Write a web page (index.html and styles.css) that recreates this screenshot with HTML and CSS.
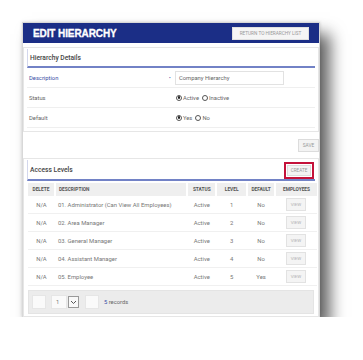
FILE: index.html
```html
<!DOCTYPE html>
<html lang="en">

<head>
    <meta charset="UTF-8" />
    <meta name="viewport" content="width=device-width, initial-scale=1" />
    <title>Edit Hierarchy</title>
    <link rel="stylesheet" href="styles.css">
</head>

<body>
    <div class="panel">
        <div class="topbar">
            <h1>EDIT HIERARCHY</h1>
            <button class="btn">RETURN TO HIERARCHY LIST</button>
        </div>

        <div class="panel-body">
            <section class="card details">
                <div class="card-head">
                    <h2>Hierarchy Details</h2>
                </div>
                <div class="form-row">
                    <span class="lbl blue">Description</span>
                    <span class="star">&bull;</span>
                    <div class="input">Company Hierarchy</div>
                </div>
                <div class="form-row">
                    <span class="lbl">Status</span>
                    <span class="star"></span>
                    <span class="radio on"></span><span class="opt">Active</span>
                    <span class="radio"></span><span class="opt">Inactive</span>
                </div>
                <div class="form-row">
                    <span class="lbl">Default</span>
                    <span class="star"></span>
                    <span class="radio on"></span><span class="opt">Yes</span>
                    <span class="radio"></span><span class="opt">No</span>
                </div>
            </section>

            <div class="save-row">
                <button class="btn">SAVE</button>
            </div>

            <section class="card access">
                <div class="card-head">
                    <h2>Access Levels</h2>
                    <span class="highlight"><button class="btn">CREATE</button></span>
                </div>
                <table class="levels">
                    <thead>
                        <tr>
                            <th class="c-del">DELETE</th>
                            <th class="c-desc">DESCRIPTION</th>
                            <th class="c-st">STATUS</th>
                            <th class="c-lv">LEVEL</th>
                            <th class="c-df">DEFAULT</th>
                            <th class="c-emp">EMPLOYEES</th>
                        </tr>
                    </thead>
                    <tbody>
                        <tr>
                            <td>N/A</td>
                            <td class="c-desc">01. Administrator (Can View All Employees)</td>
                            <td>Active</td>
                            <td>1</td>
                            <td>No</td>
                            <td><button class="btn view">VIEW</button></td>
                        </tr>
                        <tr>
                            <td>N/A</td>
                            <td class="c-desc">02. Area Manager</td>
                            <td>Active</td>
                            <td>2</td>
                            <td>No</td>
                            <td><button class="btn view">VIEW</button></td>
                        </tr>
                        <tr>
                            <td>N/A</td>
                            <td class="c-desc">03. General Manager</td>
                            <td>Active</td>
                            <td>3</td>
                            <td>No</td>
                            <td><button class="btn view">VIEW</button></td>
                        </tr>
                        <tr>
                            <td>N/A</td>
                            <td class="c-desc">04. Assistant Manager</td>
                            <td>Active</td>
                            <td>4</td>
                            <td>No</td>
                            <td><button class="btn view">VIEW</button></td>
                        </tr>
                        <tr>
                            <td>N/A</td>
                            <td class="c-desc">05. Employee</td>
                            <td>Active</td>
                            <td>5</td>
                            <td>Yes</td>
                            <td><button class="btn view">VIEW</button></td>
                        </tr>
                    </tbody>
                </table>
                <div class="pager">
                    <span class="pbox"></span>
                    <span class="pbox page-no">1</span>
                    <span class="pselect">
                        <svg width="7" height="5" viewBox="0 0 7 5"><path d="M1 1 L3.5 3.5 L6 1" fill="none" stroke="#555" stroke-width="1"/></svg>
                    </span>
                    <span class="pbox"></span>
                    <span class="records"><b>5</b> records</span>
                </div>
            </section>
        </div>
    </div>
</body>

</html>
```

FILE: styles.css
```css
html,
body {
    margin: 0;
    padding: 0;
    background: #fff;
    font-family: Roboto, "Liberation Sans", Arial, sans-serif;
}

body {
    padding: 22px 0 0 22px;
}

.panel {
    width: 296px;
    height: 293px;
    background: #fff;
    border: 1px solid #d8d8d8;
    box-shadow: 10px 12px 15px rgba(0, 0, 0, 0.62), 0 0 3px rgba(0, 0, 0, 0.15);
    display: flex;
    flex-direction: column;
}

.topbar {
    height: 20px;
    background: #1b2e86;
    display: flex;
    align-items: center;
    justify-content: space-between;
    padding: 0 10px 0 10px;
    flex-shrink: 0;
}

.topbar h1 {
    margin: 0;
    color: #fff;
    font-family: "Liberation Sans", Arial, sans-serif;
    font-weight: bold;
    font-size: 10px;
    letter-spacing: -0.1px;
    -webkit-text-stroke: 0.3px #fff;
}

.btn {
    font-family: Roboto, "Liberation Sans", Arial, sans-serif;
    font-size: 4.8px;
    color: #999;
    background: #f3f3f3;
    border: 1px solid #dcdcdc;
    padding: 0 2px;
    height: 13px;
    margin: 0;
    cursor: pointer;
    white-space: nowrap;
}

.topbar .btn {
    width: 77px;
    background: #f5f5f5;
    border-color: #e0e0e0;
    font-size: 4.7px;
}

.panel-body {
    padding: 4px 0 0 0;
    flex: 1;
    display: flex;
    flex-direction: column;
}

.card {
    border: 1px solid #e6e6e6;
    background: #fff;
}

.details {
    padding: 1px 3px 3px 3px;
}

.card-head {
    height: 17px;
    border-left: 1px solid #d3d7ec;
    border-bottom: 2px solid #7282c6;
    display: flex;
    align-items: center;
    justify-content: space-between;
    padding: 0 1px 0 2px;
}

.card-head h2 {
    margin: 0;
    font-size: 6.7px;
    font-weight: 500;
    color: #444;
}

.form-row {
    height: 19px;
    border-bottom: 1px solid #efefef;
    display: flex;
    align-items: center;
    font-size: 5.8px;
    color: #666;
}

.lbl {
    width: 140px;
    padding-left: 2px;
}

.lbl.blue {
    color: #3a4ea6;
}

.star {
    width: 6px;
    color: #3a4ea6;
    font-size: 5px;
}

.input {
    width: 104px;
    height: 12px;
    border: 1px solid #e2e2e2;
    display: flex;
    align-items: center;
    padding-left: 3px;
    color: #666;
}

.radio {
    width: 4px;
    height: 4px;
    border: 0.7px solid #555;
    border-radius: 50%;
    margin: 0 1px 0 1px;
    display: inline-flex;
    align-items: center;
    justify-content: center;
}

.radio.on::after {
    content: "";
    width: 2.4px;
    height: 2.4px;
    border-radius: 50%;
    background: #222;
}

.opt {
    margin-right: 2px;
}

.save-row {
    display: flex;
    justify-content: flex-end;
    padding: 7px 0 6px 0;
}

.save-row .btn {
    width: 21px;
    padding: 0;
}

.access {
    flex: 1;
    padding: 1px 3px 2px 3px;
}

.access .card-head {
    height: 19px;
}

.highlight {
    border: 2px solid #c4123a;
    padding: 1px 1px;
    display: flex;
    margin-top: 1px;
}

.highlight .btn {
    height: 11px;
    width: 24px;
    padding: 0;
    font-size: 4.6px;
}

.levels {
    width: 289px;
    margin: 2px 0 0 1px;
    border-collapse: collapse;
    font-size: 5.9px;
    color: #777;
}

.levels th {
    height: 13px;
    background: #efefef;
    border-left: 2px solid #fff;
    font-size: 4.8px;
    font-weight: bold;
    color: #555;
    text-align: center;
    padding: 0;
}

.levels th:first-child {
    border-left: none;
}

.levels td {
    height: 17px;
    border-bottom: 1px solid #f0f0f0;
    text-align: center;
    padding: 0;
}

.levels .c-del { width: 26px; }
.levels .c-desc { width: 128px; text-align: left; padding-left: 3px; }
.levels .c-st { width: 27px; }
.levels .c-lv { width: 29px; }
.levels .c-df { width: 26px; }
.levels .c-emp { width: 41px; }

.btn.view {
    width: 20px;
    height: 13px;
    padding: 0;
    font-size: 4.4px;
    color: #b0b0b0;
    background: #f4f4f4;
    border-color: #e2e2e2;
}

.pager {
    margin: 4px 1px 0 1px;
    height: 22px;
    background: #ececec;
    border: 1px solid #e4e4e4;
    display: flex;
    align-items: center;
    padding-left: 3px;
    font-size: 5.8px;
    color: #666;
}

.pbox {
    width: 14px;
    height: 14px;
    background: #fafafa;
    border: 1px solid #e6e6e6;
    margin-right: 5px;
    box-sizing: border-box;
}

.pbox.page-no {
    width: 16px;
    margin-right: 1px;
    display: flex;
    align-items: center;
    padding-left: 4px;
    color: #777;
}

.pselect {
    width: 9px;
    height: 10px;
    border: 1px solid #999;
    background: #f8f8f8;
    margin-right: 6px;
    display: flex;
    align-items: center;
    justify-content: center;
}

.records b {
    font-weight: normal;
    color: #3a4ea6;
}
```
